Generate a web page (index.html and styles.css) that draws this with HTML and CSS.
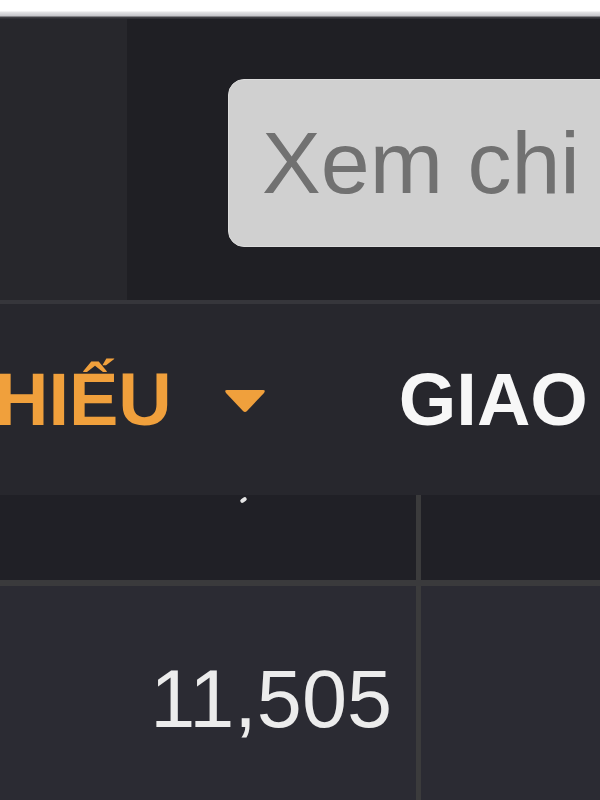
FILE: index.html
```html
<!DOCTYPE html>
<html lang="vi">

<head>
    <meta charset="UTF-8">
    <meta name="viewport" content="width=device-width, initial-scale=1.0">
    <title>Bảng giá</title>
    <link rel="stylesheet" href="styles.css">
</head>

<body>

    <div class="top-edge"></div>

    <div class="hero">
        <div class="side"></div>
        <div class="main">
            <button class="detail-btn" type="button">Xem chi tiết</button>
        </div>
    </div>

    <nav class="tabs">
        <span class="tab active">HIẾU</span>
        <svg class="caret" width="44" height="26" viewBox="0 0 44 26">
            <path d="M4 2 H40 Q43 2 41 5 L24 23 Q22 25 20 23 L3 5 Q1 2 4 2 Z" fill="#f0a03c"/>
        </svg>
        <span class="tab">GIAO</span>
    </nav>

    <div class="table">
        <div class="row head">
            <div class="cell first"><span class="tick"></span></div>
            <div class="cell"></div>
        </div>
        <div class="row body-row">
            <div class="cell first num">11,505</div>
            <div class="cell"></div>
        </div>
    </div>

</body>

</html>
```

FILE: styles.css
```css
body {
    margin: 0;
    padding: 0;
    font-family: 'Liberation Sans', Arial, sans-serif;
    background-color: #1f1f24;
    overflow: hidden;
    height: 800px;
}

.top-edge {
    height: 19px;
    background: linear-gradient(#ffffff 0, #ffffff 11px, #e4e4e6 12px, #c4c4c8 16px, #45454a 17px, #2a2a2f 19px);
}

.hero {
    display: flex;
    height: 281px;
}

.side {
    width: 127px;
    background-color: #27272c;
}

.main {
    flex: 1;
    padding: 60px 0 0 101px;
    overflow: hidden;
}

.detail-btn {
    display: block;
    width: 420px;
    height: 168px;
    padding: 0 0 0 33px;
    border: 1px solid #dcdcdc;
    border-radius: 16px 0 0 16px;
    background-color: #d0d0d0;
    color: #717171;
    font-family: 'Liberation Sans', Arial, sans-serif;
    font-size: 88px;
    line-height: 166px;
    text-align: left;
    white-space: nowrap;
    overflow: hidden;
}

.tabs {
    display: flex;
    align-items: center;
    height: 191px;
    border-top: 4px solid #36363b;
    background-color: #27272d;
    white-space: nowrap;
}

.tab {
    font-size: 74px;
    font-weight: bold;
    color: #f7f7f7;
    margin-left: 132px;
}

.tab.active {
    color: #f0a03c;
    margin-left: -5px;
}

.caret {
    margin-left: 51px;
    margin-top: 2px;
}

.row {
    display: flex;
}

.head {
    height: 85px;
    background-color: #202026;
    border-bottom: 6px solid #3a3a3c;
}

.body-row {
    height: 214px;
    background-color: #2b2b33;
}

.cell {
    flex: 1;
}

.cell.first {
    flex: none;
    box-sizing: border-box;
    width: 421px;
    border-right: 5px solid #3b3b3c;
}

.tick {
    display: block;
    width: 7px;
    height: 4px;
    margin: 3px 0 0 240px;
    border-radius: 3px;
    background-color: #e6e6e6;
    transform: rotate(-35deg);
}

.num {
    padding-top: 73px;
    padding-right: 24px;
    font-size: 81px;
    line-height: 81px;
    color: #ececec;
    text-align: right;
}
```
